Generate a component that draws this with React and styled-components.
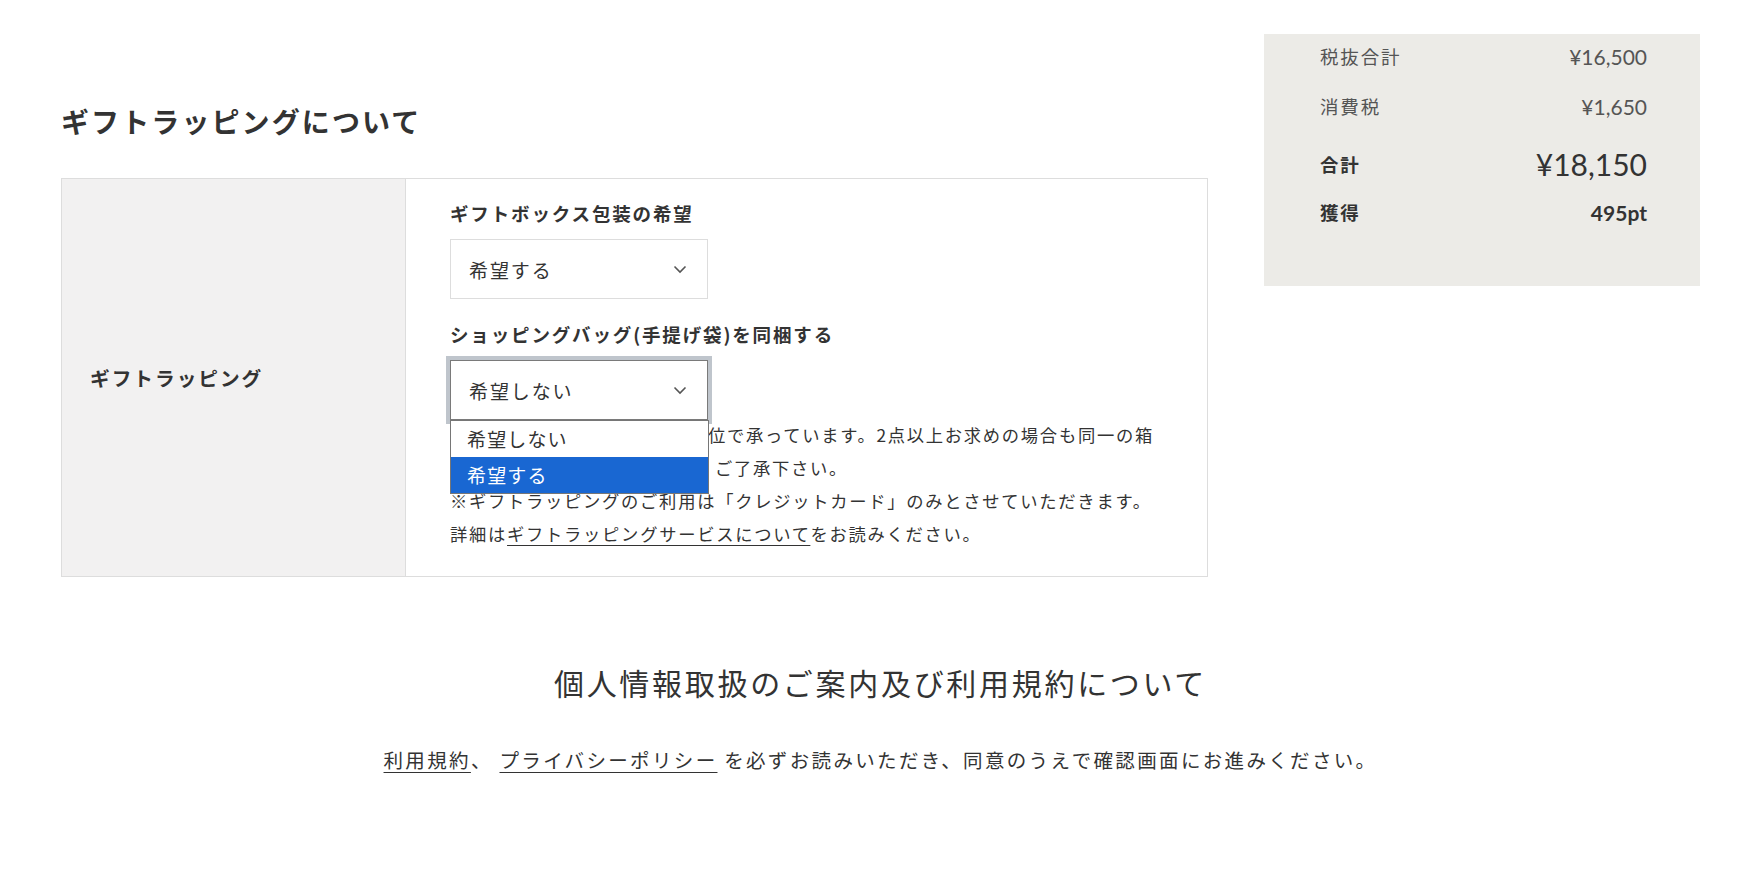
import React from "react";
import styled, { createGlobalStyle } from "styled-components";

const GlobalStyle = createGlobalStyle`
  body {
    margin: 0;
    background: #fff;
    color: #333;
    font-family: "Noto Sans CJK JP", "Noto Sans", sans-serif;
  }
  * { box-sizing: border-box; }
`;

const Page = styled.div`
  padding: 34px 60px 0 61px;
`;

const TopRow = styled.div`
  display: flex;
  align-items: flex-start;
  gap: 56px;
`;

const Main = styled.div`
  width: 1147px;
`;

const Heading = styled.h2`
  margin: 67px 0 37px;
  font-size: 28px;
  line-height: 40px;
  font-weight: 700;
  letter-spacing: 0.075em;
  color: #333;
`;

const Table = styled.div`
  display: grid;
  grid-template-columns: 344px 1fr;
  border: 1px solid #dddddd;
`;

const HeadCell = styled.div`
  display: flex;
  align-items: center;
  padding-left: 28px;
  background: #f2f1f1;
  border-right: 1px solid #dddddd;
  font-size: 19.7px;
  font-weight: 700;
  letter-spacing: 0.1em;
`;

const BodyCell = styled.div`
  padding: 21px 45px 26px 44px;
`;

const FieldLabel = styled.div`
  margin-top: ${(p) => p.$top || 0}px;
  font-size: 18.5px;
  line-height: 27px;
  font-weight: 700;
  letter-spacing: 0.1em;
`;

const SelectWrap = styled.div`
  position: relative;
  width: 258px;
  margin-top: 12px;
`;

const SelectBox = styled.div`
  display: flex;
  align-items: center;
  justify-content: space-between;
  height: 60px;
  padding: 0 20px 0 18px;
  background: #fff;
  border: 1px solid ${(p) => (p.$focused ? "#7a7a7a" : "#dddddd")};
  box-shadow: ${(p) => (p.$focused ? "0 0 0 4px #bfc5cc" : "none")};
  font-size: 19px;
  letter-spacing: 0.1em;
  color: #333;
`;

const Chevron = () => (
  <svg width="14" height="9" viewBox="0 0 14 9" fill="none">
    <path d="M1.5 1.5 L7 7 L12.5 1.5" stroke="#555" strokeWidth="1.6" />
  </svg>
);

const Options = styled.ul`
  position: absolute;
  top: 100%;
  left: 0;
  width: 259px;
  margin: 0;
  padding: 0;
  list-style: none;
  background: #fff;
  border: 1px solid #767676;
  z-index: 2;
`;

const Option = styled.li`
  height: 36px;
  line-height: 36px;
  padding-left: 16px;
  font-size: 19px;
  letter-spacing: 0.06em;
  background: ${(p) => (p.$active ? "#1967d2" : "#fff")};
  color: ${(p) => (p.$active ? "#fff" : "#333")};
`;

const Note = styled.p`
  margin: -2px 0 0;
  font-size: 17.3px;
  line-height: 33px;
  letter-spacing: 0.1em;
  color: #333;
`;

const TextLink = styled.a`
  color: #333;
  text-decoration: underline;
  text-underline-offset: 4px;
  text-decoration-thickness: 1px;
`;

const Summary = styled.div`
  width: 436px;
  height: 252px;
  padding: 9px 53px 0 56px;
  background: #ecebe7;
`;

const SumRow = styled.div`
  display: flex;
  justify-content: space-between;
  align-items: center;
  margin-top: ${(p) => p.$top || 0}px;
  height: ${(p) => (p.$big ? 36 : 26)}px;
`;

const SumLabel = styled.span`
  font-size: 18.5px;
  letter-spacing: 0.1em;
  font-weight: ${(p) => (p.$bold ? 700 : 400)};
  color: ${(p) => (p.$bold ? "#333" : "#555")};
`;

const SumValue = styled.span`
  font-family: Lato, "Noto Sans", sans-serif;
  font-size: ${(p) => (p.$big ? 30 : 21)}px;
  font-weight: ${(p) => (p.$bold ? 700 : 400)};
  color: ${(p) => (p.$big || p.$bold ? "#333" : "#555")};
`;

const Consent = styled.section`
  margin-top: 84px;
  text-align: center;
`;

const ConsentTitle = styled.h2`
  margin: 0;
  font-size: 30px;
  line-height: 42px;
  font-weight: 400;
  letter-spacing: 0.09em;
  color: #333;
`;

const ConsentText = styled.p`
  margin: 42px 0 0;
  font-size: 19.5px;
  line-height: 30px;
  letter-spacing: 0.12em;
  color: #333;
`;

export default function App() {
  return (
    <>
      <GlobalStyle />
      <Page>
        <TopRow>
          <Main>
            <Heading>ギフトラッピングについて</Heading>
            <Table>
              <HeadCell>ギフトラッピング</HeadCell>
              <BodyCell>
                <FieldLabel>ギフトボックス包装の希望</FieldLabel>
                <SelectWrap>
                  <SelectBox>
                    <span>希望する</span>
                    <Chevron />
                  </SelectBox>
                </SelectWrap>
                <FieldLabel $top={22}>ショッピングバッグ(手提げ袋)を同梱する</FieldLabel>
                <SelectWrap>
                  <SelectBox $focused>
                    <span>希望しない</span>
                    <Chevron />
                  </SelectBox>
                  <Options>
                    <Option>希望しない</Option>
                    <Option $active>希望する</Option>
                  </Options>
                </SelectWrap>
                <Note>
                  ※ギフトボックス包装は1点単位で承っています。2点以上お求めの場合も同一の箱
                  <br />
                  にはおまとめできませんので、ご了承下さい。
                  <br />
                  ※ギフトラッピングのご利用は「クレジットカード」のみとさせていただきます。
                  <br />
                  詳細は<TextLink href="#">ギフトラッピングサービスについて</TextLink>をお読みください。
                </Note>
              </BodyCell>
            </Table>
          </Main>
          <Summary>
            <SumRow>
              <SumLabel>税抜合計</SumLabel>
              <SumValue>¥16,500</SumValue>
            </SumRow>
            <SumRow $top={24}>
              <SumLabel>消費税</SumLabel>
              <SumValue>¥1,650</SumValue>
            </SumRow>
            <SumRow $top={27} $big>
              <SumLabel $bold>合計</SumLabel>
              <SumValue $big>¥18,150</SumValue>
            </SumRow>
            <SumRow $top={17}>
              <SumLabel $bold>獲得</SumLabel>
              <SumValue $bold>495pt</SumValue>
            </SumRow>
          </Summary>
        </TopRow>
        <Consent>
          <ConsentTitle>個人情報取扱のご案内及び利用規約について</ConsentTitle>
          <ConsentText>
            <TextLink href="#">利用規約</TextLink>、 <TextLink href="#">プライバシーポリシー</TextLink> を必ずお読みいただき、同意のうえで確認画面にお進みください。
          </ConsentText>
        </Consent>
      </Page>
    </>
  );
}
